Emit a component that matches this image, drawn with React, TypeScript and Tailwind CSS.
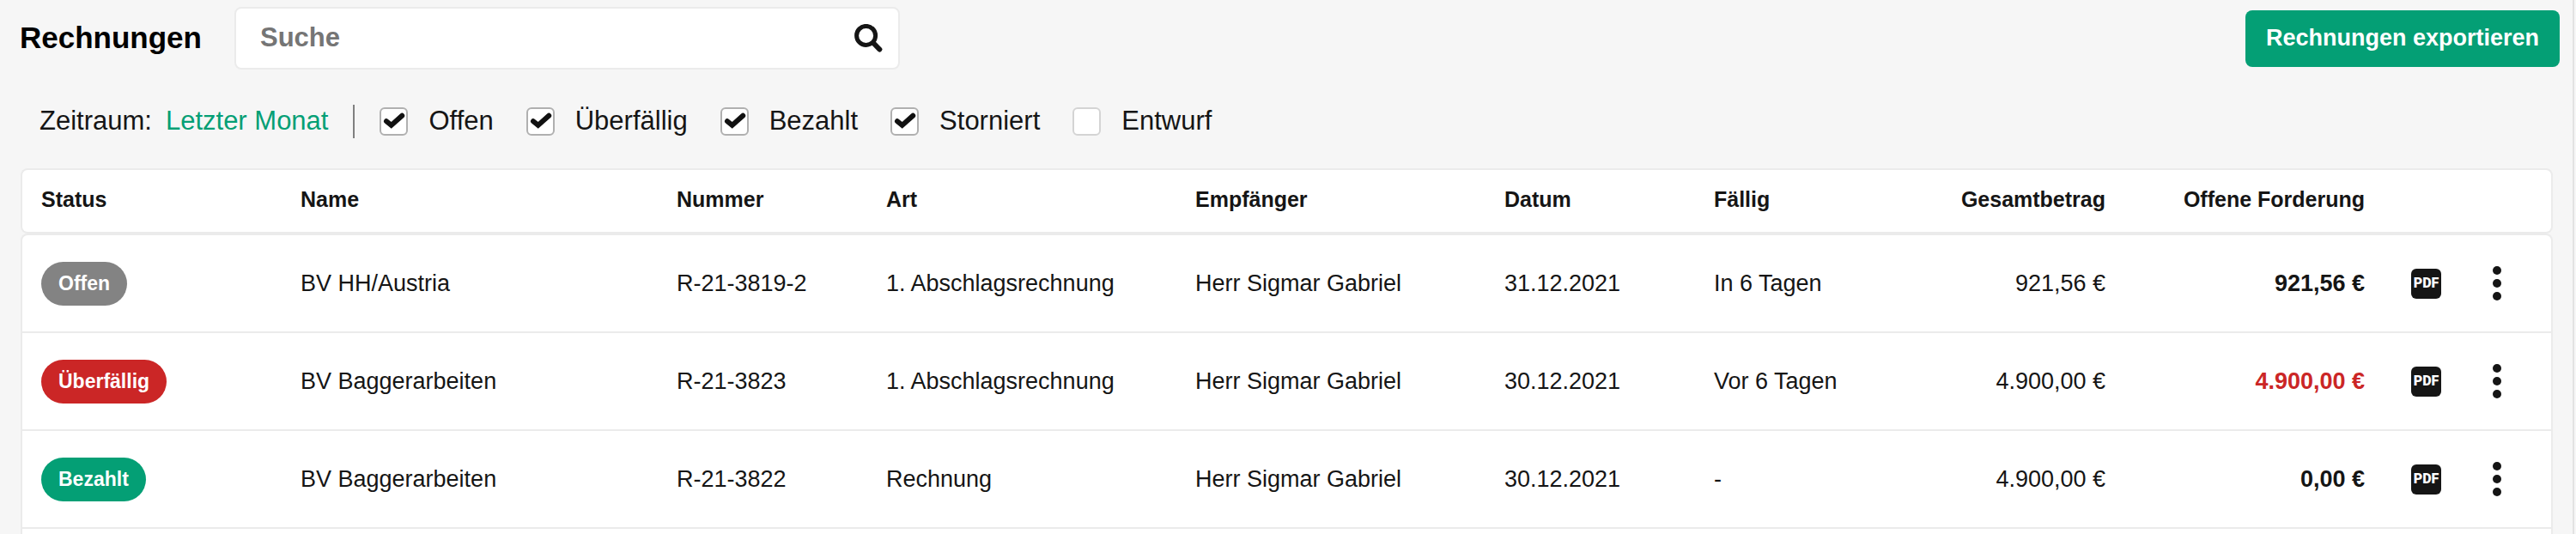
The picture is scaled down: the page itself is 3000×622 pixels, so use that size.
import { useState } from 'react'

interface Invoice {
  status: 'Offen' | 'Überfällig' | 'Bezahlt'
  name: string
  number: string
  type: string
  recipient: string
  date: string
  due: string
  total: string
  open: string
}

const INVOICES: Invoice[] = [
  { status: 'Offen', name: 'BV HH/Austria', number: 'R-21-3819-2', type: '1. Abschlagsrechnung', recipient: 'Herr Sigmar Gabriel', date: '31.12.2021', due: 'In 6 Tagen', total: '921,56 €', open: '921,56 €' },
  { status: 'Überfällig', name: 'BV Baggerarbeiten', number: 'R-21-3823', type: '1. Abschlagsrechnung', recipient: 'Herr Sigmar Gabriel', date: '30.12.2021', due: 'Vor 6 Tagen', total: '4.900,00 €', open: '4.900,00 €' },
  { status: 'Bezahlt', name: 'BV Baggerarbeiten', number: 'R-21-3822', type: 'Rechnung', recipient: 'Herr Sigmar Gabriel', date: '30.12.2021', due: '-', total: '4.900,00 €', open: '0,00 €' },
]

const FILTERS = ['Offen', 'Überfällig', 'Bezahlt', 'Storniert', 'Entwurf']

const BADGE = {
  'Offen': 'bg-[#838383]',
  'Überfällig': 'bg-[#cb2626]',
  'Bezahlt': 'bg-[#049f75]',
}

function SearchIcon() {
  return (
    <svg width="33" height="33" viewBox="0 0 33 33" fill="none" stroke="currentColor">
      <circle cx="13.6" cy="13.4" r="11" strokeWidth="5" />
      <path d="M23.5 23.5 29.3 29.5" strokeWidth="6" strokeLinecap="round" />
    </svg>
  )
}

function FilterCheckbox({ label, checked, onChange }: { label: string; checked: boolean; onChange: () => void }) {
  return (
    <label className="flex items-center gap-6 cursor-pointer">
      <span className="relative flex">
        <input type="checkbox" checked={checked} onChange={onChange}
          className="appearance-none size-[33px] rounded-md border-2 border-[#d4d4d4] checked:border-[#b0b0b0] bg-white" />
        {checked && (
          <svg viewBox="0 0 33 33" className="absolute inset-0 pointer-events-none" fill="none" stroke="#111" strokeWidth="6" strokeLinecap="round" strokeLinejoin="miter">
            <path d="M8 16.2 13.7 20.9 26.2 9.8" />
          </svg>
        )}
      </span>
      {label}
    </label>
  )
}

function InvoiceRow({ invoice }: { invoice: Invoice }) {
  return (
    <tr className="h-[114px] first:h-[116px] first:[&>td]:border-t-2 first:[&>td:first-child]:rounded-tl-lg first:[&>td:last-child]:rounded-tr-lg [&>td]:border-b-2 [&>td]:border-[#ebebeb] [&>td]:bg-white [&>td]:px-6 [&>td:first-child]:pl-[22px] [&>td:first-child]:border-l-2 [&>td:last-child]:border-r-2">
      <td>
        <span className={`inline-flex items-center h-[51px] px-5 rounded-full text-[23px] font-bold text-white align-middle ${BADGE[invoice.status]}`}>
          {invoice.status}
        </span>
      </td>
      <td>{invoice.name}</td>
      <td>{invoice.number}</td>
      <td>{invoice.type}</td>
      <td>{invoice.recipient}</td>
      <td>{invoice.date}</td>
      <td>{invoice.due}</td>
      <td className="text-right">{invoice.total}</td>
      <td className={`text-right font-bold ${invoice.status === 'Überfällig' ? 'text-[#cb2626]' : ''}`}>{invoice.open}</td>
      <td>
        <button className="flex items-center justify-center size-[35px] mx-auto rounded-md bg-[#151515] font-['Roboto',sans-serif] text-[16px] font-black text-white">
          PDF
        </button>
      </td>
      <td>
        <button aria-label="Aktionen" className="flex px-1.5">
          <svg width="10" height="40" viewBox="0 0 10 40" fill="currentColor">
            <circle cx="5" cy="5" r="5" />
            <circle cx="5" cy="20" r="5" />
            <circle cx="5" cy="35" r="5" />
          </svg>
        </button>
      </td>
    </tr>
  )
}

export default function App() {
  const [search, setSearch] = useState('')
  const [active, setActive] = useState(['Offen', 'Überfällig', 'Bezahlt', 'Storniert'])

  const toggle = (f: string) => setActive(active.includes(f) ? active.filter(a => a !== f) : [...active, f])

  return (
    <div className="bg-[#f6f6f6] pr-[2px]">
      <div className="flex flex-col min-h-screen border-r-2 border-[#e2e2e2] font-['Liberation_Sans',sans-serif] text-[#151515]">
        {/* Title, search, export */}
        <header className="flex items-center pt-2 pl-[23px] pr-[15px]">
          <h1 className="text-[35px] font-bold text-black">Rechnungen</h1>
          <div className="flex items-center w-[775px] h-[73px] ml-[38px] pl-7 pr-[18px] rounded-lg border-2 border-[#ebebeb] bg-white">
            <input type="text" aria-label="Suche" placeholder="Suche" value={search} onChange={e => setSearch(e.target.value)}
              className="flex-1 min-w-0 outline-none text-[31px] font-bold placeholder:text-[#757575]" />
            <button aria-label="Suchen"><SearchIcon /></button>
          </div>
          <button className="h-[66px] ml-auto px-6 rounded-lg bg-[#049f75] text-[27px] font-bold text-white">
            Rechnungen exportieren
          </button>
        </header>

        {/* Filters */}
        <div className="flex items-center h-[115px] pt-1.5 pl-[46px] text-[31px]">
          <span>Zeitraum:</span>
          <button className="ml-4 text-[#049f75]">Letzter Monat</button>
          <div className="w-[2px] h-[39px] mx-[29px] bg-[#808080]" />
          <div className="flex gap-[38px]">
            {FILTERS.map(f => (
              <FilterCheckbox key={f} label={f} checked={active.includes(f)} onChange={() => toggle(f)} />
            ))}
          </div>
        </div>

        {/* Table */}
        <div className="flex flex-col flex-1 pl-6 pr-[23px]">
          <table className="w-full table-fixed border-separate border-spacing-0 text-[27px]">
            <colgroup>
              <col className="w-[302px]" />
              <col className="w-[438px]" />
              <col className="w-[244px]" />
              <col className="w-[360px]" />
              <col className="w-[360px]" />
              <col className="w-[244px]" />
              <col className="w-[244px]" />
              <col className="w-[260px]" />
              <col className="w-[302px]" />
              <col className="w-[95px]" />
              <col className="w-[100px]" />
            </colgroup>
            <thead>
              <tr className="h-[76px] text-left text-[25px] [&>th]:pb-[3px] [&>th]:border-y-2 [&>th]:border-[#ebebeb] [&>th]:bg-white [&>th]:px-6 [&>th:first-child]:pl-[22px] [&>th:first-child]:border-l-2 [&>th:first-child]:rounded-l-lg [&>th:last-child]:border-r-2 [&>th:last-child]:rounded-r-lg">
                <th>Status</th>
                <th>Name</th>
                <th>Nummer</th>
                <th>Art</th>
                <th>Empfänger</th>
                <th>Datum</th>
                <th>Fällig</th>
                <th className="text-right">Gesamtbetrag</th>
                <th className="text-right">Offene Forderung</th>
                <th />
                <th />
              </tr>
            </thead>
            <tbody>
              {INVOICES.map(inv => <InvoiceRow key={inv.number} invoice={inv} />)}
            </tbody>
          </table>
          <div className="flex-1 border-x-2 border-[#ebebeb] bg-white" />
        </div>
      </div>
    </div>
  )
}
